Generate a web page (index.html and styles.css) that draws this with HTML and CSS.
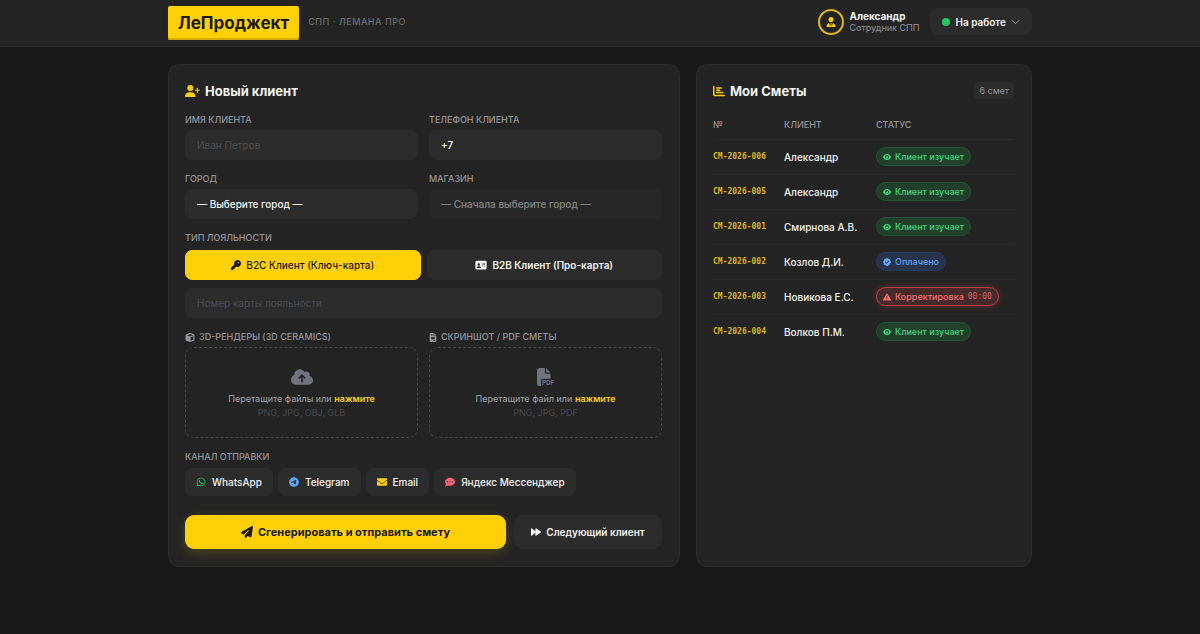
FILE: index.html
```html
<!DOCTYPE html>
<html lang="ru">
<head>
    <meta charset="UTF-8">
    <meta name="viewport" content="width=device-width, initial-scale=1.0">
    <title>ЛеПроджект</title>
    <link rel="stylesheet" href="styles.css">
</head>
<body>

<svg class="sprite" aria-hidden="true">
    <symbol id="i-user-plus" viewBox="0 0 640 512"><path d="M96 128a128 128 0 1 1 256 0A128 128 0 1 1 96 128zM0 482.300C0 383.800 79.800 304 178.300 304h91.400C368.200 304 448 383.800 448 482.300c0 16.400-13.300 29.700-29.700 29.700H29.700C13.300 512 0 498.700 0 482.300zM504 312V248H440c-13.300 0-24-10.700-24-24s10.700-24 24-24h64V136c0-13.300 10.700-24 24-24s24 10.700 24 24v64h64c13.300 0 24 10.700 24 24s-10.700 24-24 24H552v64c0 13.300-10.700 24-24 24s-24-10.700-24-24z"/></symbol>
    <symbol id="i-user-tie" viewBox="0 0 448 512"><path d="M224 256a128 128 0 1 0 0-256a128 128 0 1 0 0 256zM209.100 359.200l-18.600-31c-6.400-10.700 1.300-24.200 13.700-24.200H224h19.700c12.400 0 20.100 13.600 13.700 24.200l-18.600 31 33.400 123.900 36-146.900c2-8.100 9.800-13.400 17.900-11.300c70.100 17.600 121.900 81 121.900 156.400c0 17-13.800 30.700-30.700 30.700H30.700C13.800 512 0 498.200 0 481.300c0-75.500 51.900-138.900 121.900-156.400c8.100-2 15.900 3.300 17.900 11.300l36 146.900 33.400-123.900z"/></symbol>
    <symbol id="i-chart" viewBox="0 0 512 512"><path d="M32 32c17.700 0 32 14.300 32 32V400c0 8.800 7.200 16 16 16H480c17.700 0 32 14.300 32 32s-14.300 32-32 32H80c-44.200 0-80-35.800-80-80V64C0 46.300 14.300 32 32 32zm96 96c0-17.700 14.300-32 32-32l192 0c17.700 0 32 14.300 32 32s-14.300 32-32 32H160c-17.700 0-32-14.300-32-32zm32 64H288c17.700 0 32 14.300 32 32s-14.300 32-32 32H160c-17.700 0-32-14.300-32-32s14.300-32 32-32zm0 96H416c17.700 0 32 14.300 32 32s-14.300 32-32 32H160c-17.700 0-32-14.300-32-32s14.300-32 32-32z"/></symbol>
    <symbol id="i-key" viewBox="0 0 512 512"><path d="M336 352c97.200 0 176-78.800 176-176S433.200 0 336 0S160 78.800 160 176c0 18.700 2.900 36.800 8.300 53.700L7 391c-4.500 4.500-7 10.600-7 17v80c0 13.300 10.700 24 24 24h80c13.300 0 24-10.700 24-24V448h40c13.300 0 24-10.700 24-24V384h40c6.400 0 12.500-2.500 17-7l33.300-33.300c16.900 5.400 35 8.300 53.700 8.300zM376 96a40 40 0 1 1 0 80 40 40 0 1 1 0-80z"/></symbol>
    <symbol id="i-id-card" viewBox="0 0 576 512"><path fill-rule="evenodd" d="M64 32H512a64 64 0 0 1 64 64V416a64 64 0 0 1-64 64H64a64 64 0 0 1-64-64V96a64 64 0 0 1 64-64zM176 160a64 64 0 1 0 0 128a64 64 0 1 0 0-128zM144 320a80 80 0 0 0-80 80q0 12 16 12H272q16 0 16-12a80 80 0 0 0-80-80zM352 160V192H496V160zM352 224V256H496V224zM352 288V320H496V288z"/></symbol>
    <symbol id="i-cube" viewBox="0 0 512 512"><path d="M234.500 5.700c13.900-5 29.100-5 43.100 0l192 68.600C495 83.400 512 107.500 512 134.600V377.400c0 27-17 51.200-42.500 60.300l-192 68.600c-13.900 5-29.100 5-43.100 0l-192-68.600C17 428.600 0 404.500 0 377.400V134.600c0-27 17-51.200 42.500-60.300l192-68.600zM256 66L82.300 128 256 190l173.700-62L256 66zm32 368.600l160-57.100v-188L288 246.600v188z"/></symbol>
    <symbol id="i-file" viewBox="0 0 384 512"><path fill-rule="evenodd" d="M64 0H224V128a32 32 0 0 0 32 32H384V448a64 64 0 0 1-64 64H64a64 64 0 0 1-64-64V64A64 64 0 0 1 64 0zM256 0V128H384zM64 80V112H160V80zM64 144V176H160V144zM96 240V352H288V240zM208 416V448H320V416z"/></symbol>
    <symbol id="i-cloud" viewBox="0 0 640 512"><path d="M144 480C64.500 480 0 415.500 0 336c0-62.800 40.200-116.200 96.200-135.900c-.1-2.700-.2-5.400-.2-8.100c0-88.400 71.600-160 160-160c59.300 0 111 32.200 138.700 80.200C409.900 102 428.300 96 448 96c53 0 96 43 96 96c0 12.200-2.300 23.800-6.400 34.600C596 238.400 640 290.100 640 352c0 70.700-57.300 128-128 128H144zm79-217c-9.400 9.400-9.400 24.600 0 33.900s24.600 9.400 33.900 0l39-39V392c0 13.300 10.700 24 24 24s24-10.700 24-24V257.900l39 39c9.400 9.400 24.600 9.400 33.900 0s9.400-24.600 0-33.900l-80-80c-9.400-9.400-24.600-9.400-33.900 0l-80 80z"/></symbol>
    <symbol id="i-whatsapp" viewBox="0 0 448 512"><path d="M380.900 97.100C339 55.100 283.200 32 223.900 32c-122.400 0-222 99.600-222 222 0 39.100 10.200 77.300 29.600 111L0 480l117.700-30.900c32.400 17.700 68.900 27 106.100 27h.1c122.300 0 224.100-99.600 224.100-222 0-59.300-25.200-115-67.100-157zm-157 341.600c-33.200 0-65.700-8.900-94-25.700l-6.700-4-69.800 18.300L72 359.200l-4.400-7c-18.500-29.400-28.200-63.300-28.200-98.200 0-101.700 82.800-184.500 184.600-184.500 49.300 0 95.600 19.200 130.400 54.100 34.800 34.900 56.200 81.200 56.100 130.500 0 101.800-84.900 184.600-186.600 184.600zm101.200-138.200c-5.500-2.800-32.800-16.200-37.900-18-5.100-1.900-8.800-2.800-12.500 2.800-3.700 5.600-14.300 18-17.600 21.800-3.200 3.700-6.500 4.200-12 1.400-32.600-16.300-54-29.100-75.500-66-5.700-9.800 5.700-9.100 16.300-30.300 1.800-3.700.9-6.900-.5-9.700-1.400-2.800-12.500-30.100-17.100-41.200-4.500-10.800-9.100-9.300-12.500-9.500-3.200-.2-6.900-.2-10.600-.2-3.700 0-9.700 1.400-14.800 6.900-5.100 5.600-19.400 19-19.400 46.300 0 27.300 19.900 53.700 22.600 57.400 2.800 3.700 39.100 59.700 94.800 83.800 35.200 15.200 49 16.500 66.600 13.900 10.700-1.600 32.800-13.400 37.400-26.400 4.600-13 4.600-24.100 3.200-26.400-1.300-2.500-5-3.900-10.500-6.600z"/></symbol>
    <symbol id="i-telegram" viewBox="0 0 496 512"><path d="M248 8C111 8 0 119 0 256S111 504 248 504 496 393 496 256 385 8 248 8zM363 176.700c-3.700 39.200-19.900 134.400-28.100 178.300-3.500 18.600-10.300 24.800-16.900 25.400-14.400 1.300-25.300-9.500-39.300-18.700-21.800-14.300-34.200-23.200-55.300-37.200-24.500-16.100-8.600-25 5.300-39.500 3.700-3.800 67.100-61.500 68.300-66.700 .2-.7 .3-3.100-1.200-4.400s-3.600-.8-5.100-.5q-3.300 .7-104.600 69.100-14.800 10.200-26.900 9.900c-8.900-.2-25.900-5-38.600-9.100-15.500-5-27.900-7.700-26.800-16.300q.8-6.700 18.500-13.700 108.400-47.200 144.600-62.300c68.900-28.600 83.200-33.600 92.500-33.800 2.100 0 6.600 .5 9.600 2.900a10.500 10.500 0 0 1 3.500 6.700A43.800 43.800 0 0 1 363 176.700z"/></symbol>
    <symbol id="i-mail" viewBox="0 0 512 512"><path d="M48 64C21.500 64 0 85.500 0 112c0 15.100 7.100 29.300 19.200 38.400L236.800 313.600c11.400 8.500 27 8.500 38.400 0L492.800 150.400c12.100-9.100 19.200-23.300 19.200-38.400c0-26.500-21.500-48-48-48H48zM0 176V384c0 35.300 28.700 64 64 64H448c35.300 0 64-28.700 64-64V176L294.400 339.200c-22.800 17.100-54 17.100-76.800 0L0 176z"/></symbol>
    <symbol id="i-chat" viewBox="0 0 512 512"><path fill-rule="evenodd" d="M256 448c141.400 0 256-93.100 256-208S397.400 32 256 32S0 125.100 0 240c0 45.100 17.700 86.800 47.700 120.900c-1.900 24.500-11.400 46.300-21.400 62.900c-5.500 9.200-11.100 16.600-20.100 27.300C0 457 -1 464 1.300 470.200S9.600 480 16 480c28.700 0 57.600-8.900 81.600-19.300c22.900-10 42.400-21.900 54.300-30.600c31.800 11.500 67 17.900 104.100 17.900zM128 208a32 32 0 1 0 0 64a32 32 0 1 0 0-64zM256 208a32 32 0 1 0 0 64a32 32 0 1 0 0-64zM384 208a32 32 0 1 0 0 64a32 32 0 1 0 0-64z"/></symbol>
    <symbol id="i-plane" viewBox="0 0 512 512"><path d="M498.100 5.600c10.100 7 15.400 19.100 13.500 31.200l-64 416c-1.500 9.700-7.400 18.200-16 23s-18.900 5.400-28 1.600L284 427.700l-68.500 74.100c-8.900 9.700-22.900 12.900-35.200 8.100S160 493.200 160 480V396.400c0-4 1.500-7.800 4.200-10.700L331.800 202.800c5.800-6.300 5.600-16-.4-22s-15.700-6.400-22-.7L106 360.800 17.700 316.600C7.100 311.300 .3 300.700 0 288.900s5.900-22.800 16.100-28.700l448-256c10.700-6.100 23.900-5.500 34 1.400z"/></symbol>
    <symbol id="i-forward" viewBox="0 0 512 512"><path d="M0 96c0-27 30-42 52-25L224 214V96c0-27 30-42 52-25L500 231q24 25 0 50L276 441c-22 17-52 2-52-25V298L52 441c-22 17-52 2-52-25z"/></symbol>
    <symbol id="i-eye" viewBox="0 0 576 512"><path fill-rule="evenodd" d="M288 32c-81 0-146 37-193 81C48 156 17 208 3 244q-5 12 0 24c14 36 45 88 92 131c47 44 112 81 193 81s146-37 193-81c47-43 78-95 92-131q5-12 0-24c-14-36-45-88-92-131C434 69 369 32 288 32zM288 112a144 144 0 1 1 0 288a144 144 0 1 1 0-288zM288 192c0 35-29 64-64 64q-12 0-23-4a88 88 0 1 0 83-60z"/></symbol>
    <symbol id="i-check" viewBox="0 0 512 512"><path fill-rule="evenodd" d="M256 0q52 0 84 54q62-15 99 19t19 99q54 32 54 84t-54 84q15 62-19 99t-99 19q-32 54-84 54t-84-54q-62 15-99-19t-19-99Q0 308 0 256t54-84Q39 110 73 73t99-19Q204 0 256 0zM352 176L224 304l-64-64-34 34 98 98 162-162z"/></symbol>
    <symbol id="i-warn" viewBox="0 0 512 512"><path fill-rule="evenodd" d="M256 32q18 0 28 16L507 428q10 16 0 34t-27 18H32q-17 0-27-18t0-34L228 48q10-16 28-16zM232 160V320H280V160zM256 352a32 32 0 1 0 0 64a32 32 0 1 0 0-64z"/></symbol>
</svg>

<header class="header">
    <div class="container header-inner">
        <div class="brand">
            <a class="logo" href="#">ЛеПроджект</a>
            <span class="brand-sub">СПП · ЛЕМАНА ПРО</span>
        </div>
        <div class="user">
            <div class="avatar"><svg class="icon"><use href="#i-user-tie"/></svg></div>
            <div class="user-info">
                <div class="user-name">Александр</div>
                <div class="user-role">Сотрудник СПП</div>
            </div>
            <button class="status-btn" type="button">
                <span class="dot"></span>
                На работе
                <svg class="chevron" viewBox="0 0 10 6"><path d="M1 1l4 4 4-4"/></svg>
            </button>
        </div>
    </div>
</header>

<main class="container layout">
    <form class="card">
        <h2 class="card-title"><svg class="icon icon-wide"><use href="#i-user-plus"/></svg>Новый клиент</h2>

        <div class="row">
            <div class="field">
                <label for="name">Имя клиента</label>
                <input class="control" type="text" id="name" placeholder="Иван Петров">
            </div>
            <div class="field">
                <label for="phone">Телефон клиента</label>
                <input class="control" type="tel" id="phone" value="+7">
            </div>
        </div>

        <div class="row">
            <div class="field">
                <label for="city">Город</label>
                <select class="control" id="city"><option>— Выберите город —</option></select>
            </div>
            <div class="field">
                <label for="shop">Магазин</label>
                <select class="control" id="shop" disabled><option>— Сначала выберите город —</option></select>
            </div>
        </div>

        <div class="field">
            <label for="card">Тип лояльности</label>
            <div class="loyalty">
                <button class="toggle active" type="button"><svg class="icon"><use href="#i-key"/></svg>B2C Клиент (Ключ-карта)</button>
                <button class="toggle" type="button"><svg class="icon icon-card"><use href="#i-id-card"/></svg>B2B Клиент (Про-карта)</button>
            </div>
            <input class="control" type="text" id="card" placeholder="Номер карты лояльности">
        </div>

        <div class="row">
            <div class="field">
                <span class="label"><svg class="icon"><use href="#i-cube"/></svg>3D-рендеры (3D Ceramics)</span>
                <button class="dropzone" type="button">
                    <svg class="drop-icon"><use href="#i-cloud"/></svg>
                    <span class="drop-text">Перетащите файлы или <b>нажмите</b></span>
                    <span class="drop-hint">PNG, JPG, OBJ, GLB</span>
                </button>
            </div>
            <div class="field">
                <span class="label"><svg class="icon icon-file"><use href="#i-file"/></svg>Скриншот / PDF сметы</span>
                <button class="dropzone" type="button">
                    <svg class="drop-icon" viewBox="0 0 512 512"><path d="M0 64C0 28.700 28.700 0 64 0H224V128c0 17.700 14.300 32 32 32H384V304H176c-35.300 0-64 28.700-64 64V512H64c-35.300 0-64-28.700-64-64V64zM384 128H256V0z"/><text x="140" y="490" font-size="180" font-weight="700">PDF</text></svg>
                    <span class="drop-text">Перетащите файл или <b>нажмите</b></span>
                    <span class="drop-hint">PNG, JPG, PDF</span>
                </button>
            </div>
        </div>

        <div class="field">
            <span class="label">Канал отправки</span>
            <div class="channels">
                <button class="chip" type="button"><svg class="icon green"><use href="#i-whatsapp"/></svg>WhatsApp</button>
                <button class="chip" type="button"><svg class="icon blue"><use href="#i-telegram"/></svg>Telegram</button>
                <button class="chip" type="button"><svg class="icon yellow"><use href="#i-mail"/></svg>Email</button>
                <button class="chip" type="button"><svg class="icon red"><use href="#i-chat"/></svg>Яндекс Мессенджер</button>
            </div>
        </div>

        <div class="actions">
            <button class="btn-primary" type="submit"><svg class="icon icon-big"><use href="#i-plane"/></svg>Сгенерировать и отправить смету</button>
            <button class="btn-secondary" type="button"><svg class="icon"><use href="#i-forward"/></svg>Следующий клиент</button>
        </div>
    </form>

    <section class="card">
        <div class="card-head">
            <h2 class="card-title"><svg class="icon icon-big"><use href="#i-chart"/></svg>Мои Сметы</h2>
            <span class="count">6 смет</span>
        </div>
        <table class="estimates">
            <thead>
                <tr><th class="col-num">№</th><th class="col-client">Клиент</th><th>Статус</th></tr>
            </thead>
            <tbody>
                <tr><td class="num">СМ-2026-006</td><td>Александр</td><td><span class="badge viewing"><svg class="icon"><use href="#i-eye"/></svg>Клиент изучает</span></td></tr>
                <tr><td class="num">СМ-2026-005</td><td>Александр</td><td><span class="badge viewing"><svg class="icon"><use href="#i-eye"/></svg>Клиент изучает</span></td></tr>
                <tr><td class="num">СМ-2026-001</td><td>Смирнова А.В.</td><td><span class="badge viewing"><svg class="icon"><use href="#i-eye"/></svg>Клиент изучает</span></td></tr>
                <tr><td class="num">СМ-2026-002</td><td>Козлов Д.И.</td><td><span class="badge paid"><svg class="icon"><use href="#i-check"/></svg>Оплачено</span></td></tr>
                <tr><td class="num">СМ-2026-003</td><td>Новикова Е.С.</td><td><span class="badge fix"><svg class="icon"><use href="#i-warn"/></svg>Корректировка <span class="timer">00:00</span></span></td></tr>
                <tr><td class="num">СМ-2026-004</td><td>Волков П.М.</td><td><span class="badge viewing"><svg class="icon"><use href="#i-eye"/></svg>Клиент изучает</span></td></tr>
            </tbody>
        </table>
    </section>
</main>

</body>
</html>
```
FILE: styles.css
```css
:root {
    --bg: #191919;
    --panel: #242424;
    --field: #2c2c2c;
    --line: #2c2c2c;
    --yellow: #ffd008;
    --muted: #94959a;
}
* {
    box-sizing: border-box;
}
body {
    margin: 0;
    min-height: 100vh;
    background: var(--bg);
    color: #f2f2f2;
    font-family: Inter, "Noto Sans", sans-serif;
    font-size: 11px;
}
button, input, select {
    font: inherit;
    color: inherit;
}
button {
    cursor: pointer;
}
.sprite {
    position: absolute;
    width: 0;
    height: 0;
}
.icon {
    width: 10px;
    height: 10px;
    flex: none;
    fill: currentColor;
}
.icon-big {
    width: 12px;
    height: 12px;
}
.icon-wide {
    width: 15px;
    height: 12px;
}
.icon-card {
    width: 12px;
}
.container {
    max-width: 896px;
    margin: 0 auto;
    padding: 0 16px;
}

/* header */
.header {
    background: var(--panel);
    border-bottom: 1px solid var(--line);
}
.header-inner {
    display: flex;
    align-items: center;
    justify-content: space-between;
    height: 46px;
}
.brand {
    display: flex;
    align-items: center;
    gap: 9px;
}
.logo {
    padding: 0 10px;
    background: var(--yellow);
    border-radius: 2px;
    box-shadow: inset 0 -2px #d4ad06;
    color: #1a1a1a;
    font-size: 17px;
    font-weight: 700;
    line-height: 34px;
    text-decoration: none;
}
.brand-sub {
    padding-bottom: 3px;
    color: #6b6c70;
    font-size: 9px;
    font-weight: 500;
    letter-spacing: 0.06em;
}
.user {
    display: flex;
    align-items: center;
    padding-bottom: 3px;
}
.avatar {
    display: flex;
    align-items: center;
    justify-content: center;
    width: 26px;
    height: 26px;
    margin-right: 5px;
    border: 2px solid #dcb81c;
    border-radius: 50%;
    color: var(--yellow);
}
.user-info {
    margin-right: 11px;
}
.user-name {
    font-size: 10px;
    font-weight: 700;
    line-height: 12px;
}
.user-role {
    color: var(--muted);
    font-size: 9px;
    line-height: 11px;
}
.status-btn {
    display: flex;
    align-items: center;
    gap: 5px;
    height: 27px;
    padding: 0 11px;
    background: var(--field);
    border: 1px solid var(--line);
    border-radius: 7px;
    font-size: 10px;
    font-weight: 600;
}
.dot {
    width: 8px;
    height: 8px;
    background: #22c55e;
    border-radius: 50%;
}
.chevron {
    width: 9px;
    height: 6px;
    fill: none;
    stroke: #a5a6aa;
}

/* cards */
.layout {
    display: grid;
    grid-template-columns: minmax(0, 1fr) 336px;
    gap: 16px;
    margin-top: 17px;
}
.card {
    padding: 16px 17px 17px 16px;
    background: var(--panel);
    border: 1px solid var(--line);
    border-radius: 11px;
}
.card-title {
    display: flex;
    align-items: center;
    gap: 5px;
    margin: 0 0 13px;
    font-size: 13px;
    font-weight: 700;
    line-height: 20px;
}
.card-title .icon {
    color: var(--yellow);
}
.row {
    display: grid;
    grid-template-columns: 1fr 1fr;
    gap: 11px;
}
.field {
    margin-bottom: 13px;
}
label, .label {
    display: flex;
    align-items: center;
    gap: 4px;
    margin-bottom: 4px;
    color: var(--muted);
    font-size: 9px;
    font-weight: 500;
    line-height: 12px;
    text-transform: uppercase;
}
.label .icon {
    height: 9px;
}
.label .icon-file {
    width: 8px;
}
.control {
    display: block;
    width: 100%;
    height: 30px;
    padding: 0 11px;
    background: var(--field);
    border: 1px solid var(--line);
    border-radius: 7px;
    outline: none;
    appearance: none;
    font-size: 10px;
    font-weight: 500;
}
.control::placeholder {
    color: #4c4d50;
    font-weight: 400;
}
.control:disabled {
    color: #f2f2f2;
    opacity: 0.45;
}
.loyalty {
    display: grid;
    grid-template-columns: 1fr 1fr;
    gap: 6px;
    margin: 6px 0 8px;
}
.toggle {
    display: flex;
    align-items: center;
    justify-content: center;
    gap: 5px;
    height: 30px;
    background: var(--field);
    border: 1px solid var(--line);
    border-radius: 7px;
    font-size: 10px;
    font-weight: 600;
}
.toggle.active {
    background: var(--yellow);
    border-color: var(--yellow);
    color: #1a1a1a;
    font-weight: 500;
}
.dropzone {
    display: flex;
    flex-direction: column;
    align-items: center;
    width: 100%;
    height: 91px;
    padding: 20px 0 0;
    background: none;
    border: 1px dashed #464648;
    border-radius: 9px;
    font-size: 9px;
}
.drop-icon {
    width: 22px;
    height: 18px;
    margin-bottom: 6px;
    fill: #71747f;
    overflow: visible;
}
.drop-text {
    color: #a3a4a8;
    line-height: 14px;
}
.drop-text b {
    color: var(--yellow);
    font-weight: 600;
}
.drop-hint {
    color: #48494c;
    line-height: 14px;
}
.channels {
    display: flex;
    flex-wrap: wrap;
    gap: 5px;
    margin-top: 5px;
}
.chip {
    display: flex;
    align-items: center;
    gap: 6px;
    height: 28px;
    padding: 0 10px;
    background: var(--field);
    border: 1px solid var(--line);
    border-radius: 7px;
    font-size: 10px;
    font-weight: 500;
}
.green { color: #22c55e; }
.blue { color: #60a5fa; }
.yellow { color: var(--yellow); }
.red { color: #f8636f; }
.actions {
    display: grid;
    grid-template-columns: minmax(0, 1fr) 148px;
    gap: 8px;
    margin-top: 19px;
}
.btn-primary, .btn-secondary {
    display: flex;
    align-items: center;
    justify-content: center;
    gap: 5px;
    height: 34px;
    border-radius: 9px;
}
.btn-primary {
    background: var(--yellow);
    border: none;
    box-shadow: 0 4px 12px rgba(255, 208, 8, 0.18);
    color: #1a1a1a;
    font-size: 11px;
    font-weight: 700;
}
.btn-secondary {
    background: var(--field);
    border: 1px solid var(--line);
    font-size: 10px;
    font-weight: 600;
}

/* estimates */
.card-head {
    display: flex;
    justify-content: space-between;
    align-items: flex-start;
}
.count {
    margin-top: 1px;
    padding: 0 5px;
    background: var(--field);
    border-radius: 4px;
    color: var(--muted);
    font-size: 9px;
    line-height: 17px;
}
.estimates {
    width: 100%;
    border-collapse: collapse;
    table-layout: fixed;
}
.estimates th {
    height: 25px;
    padding: 0 0 3px;
    border-bottom: 1px solid var(--line);
    color: var(--muted);
    font-size: 9px;
    font-weight: 500;
    text-align: left;
    text-transform: uppercase;
}
.col-num {
    width: 71px;
}
.col-client {
    width: 92px;
}
.estimates td {
    height: 35px;
    padding: 0;
    border-bottom: 1px solid #292929;
    font-size: 10px;
    font-weight: 500;
}
.estimates tr:last-child td {
    border-bottom: none;
}
.estimates .num {
    color: #d9b616;
    font-family: "DejaVu Sans Mono", monospace;
    font-size: 8px;
    font-weight: 700;
}
.badge {
    display: inline-flex;
    align-items: center;
    gap: 4px;
    height: 19px;
    padding: 0 6px;
    border: 1px solid;
    border-radius: 10px;
    font-size: 9px;
    font-weight: 500;
    vertical-align: middle;
}
.badge .icon {
    width: 8px;
    height: 8px;
}
.viewing {
    background: #21402c;
    border-color: #265236;
    color: #42d67c;
}
.paid {
    background: #26344d;
    border-color: #293b5c;
    color: #60a5fa;
}
.fix {
    background: #472a2c;
    border-color: #b53d40;
    box-shadow: 0 0 6px rgba(239, 68, 68, 0.4);
    color: #f47174;
}
.timer {
    font-family: "DejaVu Sans Mono", monospace;
    font-size: 8px;
    opacity: 0.8;
}
```
